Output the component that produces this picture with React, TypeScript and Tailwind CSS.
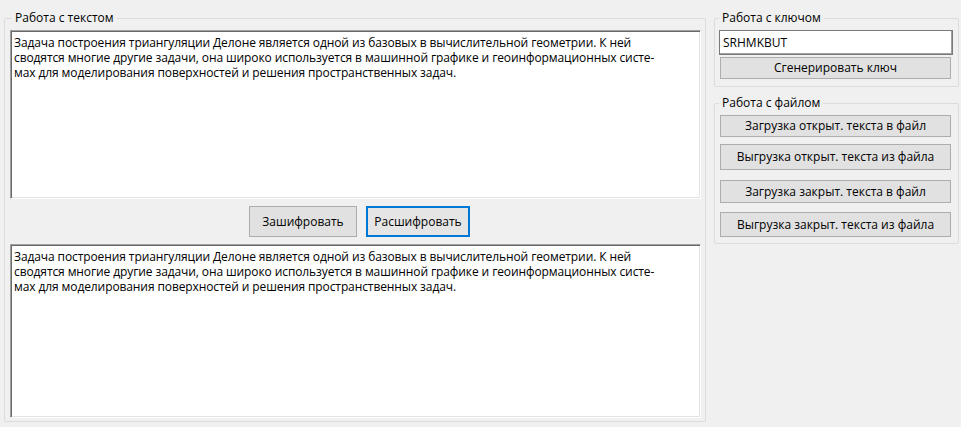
import React from "react";

const font = { fontFamily: '"Open Sans", "Noto Sans", sans-serif' };

const lines = [
  "Задача построения триангуляции Делоне является одной из базовых в вычислительной геометрии. К ней",
  "сводятся многие другие задачи, она широко используется в машинной графике и геоинформационных систе-",
  "мах для моделирования поверхностей и решения пространственных задач.",
];

function TextArea({ h }: { h: string }) {
  return (
    <div
      className={`${h} w-[691px] bg-white border border-t-[#a0a0a0] border-l-[#a0a0a0] border-r-white border-b-white shadow-[inset_1px_1px_0_#696969,inset_-1px_-1px_0_#e3e3e3] px-[3px] pt-[4px] text-[12px] leading-[15px] tracking-[-0.1px] text-black whitespace-pre`}
    >
      {lines.map((l, i) => (
        <div key={i}>{l}</div>
      ))}
    </div>
  );
}

function Btn({ label, h, extra = "" }: { label: string; h: string; extra?: string }) {
  return (
    <button
      className={`${h} w-[231px] bg-[#e1e1e1] border border-[#adadad] text-[12px] text-black flex items-center justify-center ${extra}`}
    >
      {label}
    </button>
  );
}

export default function App() {
  return (
    <div className="w-[961px] h-[427px] bg-[#f0f0f0] overflow-hidden" style={font}>
      <div className="flex pt-[10px] pl-[4px]">
        {/* Main group */}
        <fieldset className="w-[702px] h-[412px] border border-[#dcdcdc] rounded-[2px] pl-[5px] pt-[4px] flex flex-col">
          <legend className="ml-[2px] px-[3px] text-[12px] leading-[16px] text-black">Работа с текстом</legend>
          <TextArea h="h-[169px]" />
          <div className="flex mt-[7px] ml-[239px] gap-[9px]">
            <button className="w-[108px] h-[31px] bg-[#e1e1e1] border border-[#adadad] text-[12px] text-black">
              Зашифровать
            </button>
            <button className="w-[104px] h-[31px] bg-[#e5e5e5] border-2 border-[#0078d7] text-[12px] text-black">
              Расшифровать
            </button>
          </div>
          <div className="mt-[7px]">
            <TextArea h="h-[174px]" />
          </div>
        </fieldset>

        {/* Right column */}
        <div className="ml-[8px] flex flex-col">
          <fieldset className="w-[245px] h-[77px] border border-[#dcdcdc] rounded-[2px] pl-[4px] pt-[4px]">
            <legend className="px-[3px] text-[12px] leading-[16px] text-black">Работа с ключом</legend>
            <div className="w-[234px] h-[25px] bg-white border border-[#7a7a7a] shadow-[inset_-1px_-1px_0_#a0a0a0] px-[3px] flex items-center text-[12px] text-black">
              SRHMKBUT
            </div>
            <div className="mt-[2px] ml-[1px]">
              <Btn label="Сгенерировать ключ" h="h-[22px]" />
            </div>
          </fieldset>

          <fieldset className="mt-[8px] w-[245px] h-[149px] border border-[#dcdcdc] rounded-[2px] pl-[5px] pt-[4px] flex flex-col">
            <legend className="ml-[-1px] px-[3px] text-[12px] leading-[16px] text-black">Работа с файлом</legend>
            <Btn label="Загрузка открыт. текста в файл" h="h-[22px]" />
            <Btn label="Выгрузка открыт. текста из файла" h="h-[26px]" extra="mt-[7px]" />
            <Btn label="Загрузка закрыт. текста в файл" h="h-[23px]" extra="mt-[10px]" />
            <Btn label="Выгрузка закрыт. текста из файла" h="h-[25px]" extra="mt-[9px]" />
          </fieldset>
        </div>
      </div>
    </div>
  );
}
